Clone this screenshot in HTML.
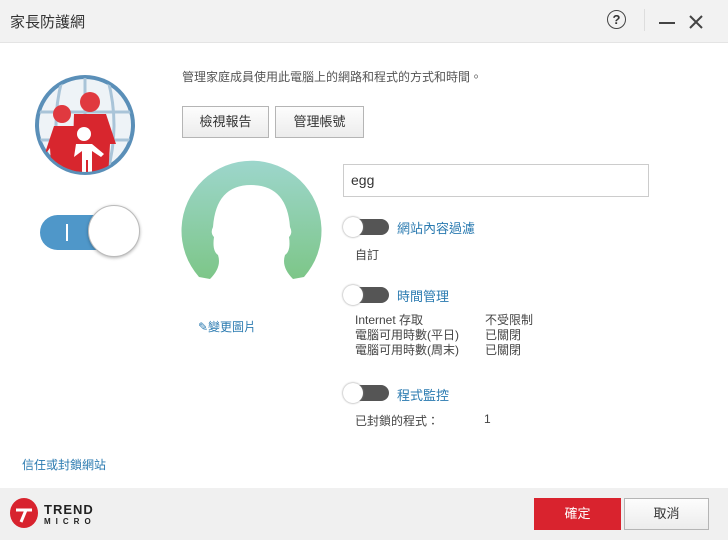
<!DOCTYPE html>
<html><head><meta charset="utf-8"><style>
body{margin:0;width:728px;height:540px;position:relative;background:#fff;font-family:"Liberation Sans","Noto Sans CJK TC",sans-serif;overflow:hidden;color:#444}
.a{position:absolute;white-space:nowrap}
.btn{position:absolute;border:1px solid #b5b5b5;background:linear-gradient(#fdfdfd,#ececec);font-size:13px;color:#333;text-align:center;box-sizing:border-box}
.tg{position:absolute;width:46px;height:20px}
.tg .t{position:absolute;left:6px;top:2px;width:40px;height:16px;border-radius:8px;background:#555}
.tg .k{position:absolute;left:0;top:0;width:20px;height:20px;border-radius:50%;background:#fff;box-shadow:0 0 2px #888}
.lb{font-size:13px;color:#2a7ab0}
.s{font-size:12px;color:#444}
</style></head><body>
<div class="a" style="left:0;top:0;width:728px;height:42px;background:#f2f2f2;border-bottom:1px solid #e4e4e4"></div>
<div class="a" style="left:10px;top:11px;font-size:15px;color:#333">家長防護網</div>
<div class="a" style="left:607px;top:10px;width:19px;height:19px;border:1.5px solid #444;border-radius:50%;box-sizing:border-box;text-align:center;font-size:13px;line-height:17px;color:#333;font-weight:bold">?</div>
<div class="a" style="left:644px;top:9px;width:1px;height:22px;background:#ddd"></div>
<div class="a" style="left:659px;top:22px;width:16px;height:2px;background:#444"></div>
<svg class="a" style="left:689px;top:15px" width="14" height="14"><path d="M1 1L13 13M13 1L1 13" stroke="#444" stroke-width="2"/></svg>

<svg class="a" style="left:32px;top:72px" width="106" height="106" viewBox="0 0 106 106">
<defs><clipPath id="c"><circle cx="53" cy="53" r="47"/></clipPath></defs>
<circle cx="53" cy="53" r="50" fill="#5a8fb8"/>
<circle cx="53" cy="53" r="46" fill="#eef3f7"/>
<g clip-path="url(#c)" stroke="#a9c4d8" stroke-width="3" fill="none">
<path d="M5 40H101M5 68H101M53 5V101M30 8Q18 53 30 98M76 8Q88 53 76 98"/>
<circle cx="58" cy="30" r="10" fill="#e0393f" stroke="none"/>
<circle cx="30" cy="42" r="9" fill="#e0393f" stroke="none"/>
<path d="M42 42h32l10 30h-6l-2 34H40z" fill="#d8262e" stroke="none"/>
<path d="M22 54h20l4 52H20l-2-30l-6 8z" fill="#d8262e" stroke="none"/>
<circle cx="52" cy="62" r="7" fill="#fff" stroke="none"/>
<path d="M44 72h16l12 10l-3 3l-9-6v27h-4v-18h-2v18h-4v-27l-8 6z" fill="#fff" stroke="none"/>
</g></svg>

<div class="a" style="left:40px;top:215px;width:80px;height:35px;border-radius:18px;background:#4f97c9"></div>
<div class="a" style="left:66px;top:224px;width:2px;height:17px;background:#fff"></div>
<div class="a" style="left:88px;top:205px;width:52px;height:52px;border-radius:50%;background:#fff;border:1px solid #bbb;box-sizing:border-box;box-shadow:0 1px 3px rgba(0,0,0,.3)"></div>

<div class="a" style="left:182px;top:68px;font-size:12px;color:#555">管理家庭成員使用此電腦上的網路和程式的方式和時間。</div>
<div class="btn" style="left:182px;top:106px;width:87px;height:32px;line-height:30px">檢視報告</div>
<div class="btn" style="left:275px;top:106px;width:89px;height:32px;line-height:30px">管理帳號</div>

<svg class="a" style="left:181px;top:155px" width="141" height="126" viewBox="0 0 141 126">
<defs><linearGradient id="g" x1="0" y1="0" x2="0" y2="1"><stop offset="0" stop-color="#9dd6cc"/><stop offset="1" stop-color="#7dc688"/></linearGradient></defs>
<path d="M18 122A70 70 0 1 1 123 122L112 124Q100 112 104 100Q110 96 108 82Q112 78 109 72Q106 30 70 30Q35 30 32 72Q29 78 33 82Q31 96 37 100Q41 112 29 124Z" fill="url(#g)"/>
</svg>
<div class="a lb" style="left:198px;top:318px;font-size:12px">✎變更圖片</div>

<div class="a" style="left:343px;top:164px;width:306px;height:33px;border:1px solid #ccc;box-sizing:border-box"></div>
<div class="a" style="left:351px;top:172px;font-size:14px;color:#333">egg</div>

<div class="tg" style="left:343px;top:217px"><div class="t"></div><div class="k"></div></div>
<div class="a lb" style="left:397px;top:218px">網站內容過濾</div>
<div class="a s" style="left:355px;top:246px">自訂</div>

<div class="tg" style="left:343px;top:285px"><div class="t"></div><div class="k"></div></div>
<div class="a lb" style="left:397px;top:286px">時間管理</div>
<div class="a s" style="left:355px;top:313px;line-height:15px">Internet 存取<br>電腦可用時數(平日)<br>電腦可用時數(周末)</div>
<div class="a s" style="left:485px;top:313px;line-height:15px">不受限制<br>已關閉<br>已關閉</div>

<div class="tg" style="left:343px;top:383px"><div class="t"></div><div class="k"></div></div>
<div class="a lb" style="left:397px;top:385px">程式監控</div>
<div class="a s" style="left:355px;top:412px">已封鎖的程式：</div>
<div class="a s" style="left:484px;top:412px">1</div>

<div class="a lb" style="left:22px;top:456px;font-size:12px">信任或封鎖網站</div>

<div class="a" style="left:0;top:488px;width:728px;height:52px;background:#f0f0f0"></div>
<div class="a" style="left:10px;top:498px;width:28px;height:30px;border-radius:50%;background:#d8232e"></div>
<svg class="a" style="left:10px;top:498px" width="28" height="30"><path d="M6 12h16M16 12l-5 12" stroke="#fff" stroke-width="3" fill="none"/></svg>
<div class="a" style="left:44px;top:502px;font-size:13px;font-weight:bold;color:#222;letter-spacing:1px">TREND</div>
<div class="a" style="left:44px;top:517px;font-size:8px;font-weight:bold;color:#222;letter-spacing:5px">MICRO</div>
<div class="a" style="left:534px;top:498px;width:87px;height:32px;background:#d9232e;color:#fff;font-size:13px;text-align:center;line-height:32px">確定</div>
<div class="btn" style="left:624px;top:498px;width:85px;height:32px;line-height:30px">取消</div>
</body></html>
